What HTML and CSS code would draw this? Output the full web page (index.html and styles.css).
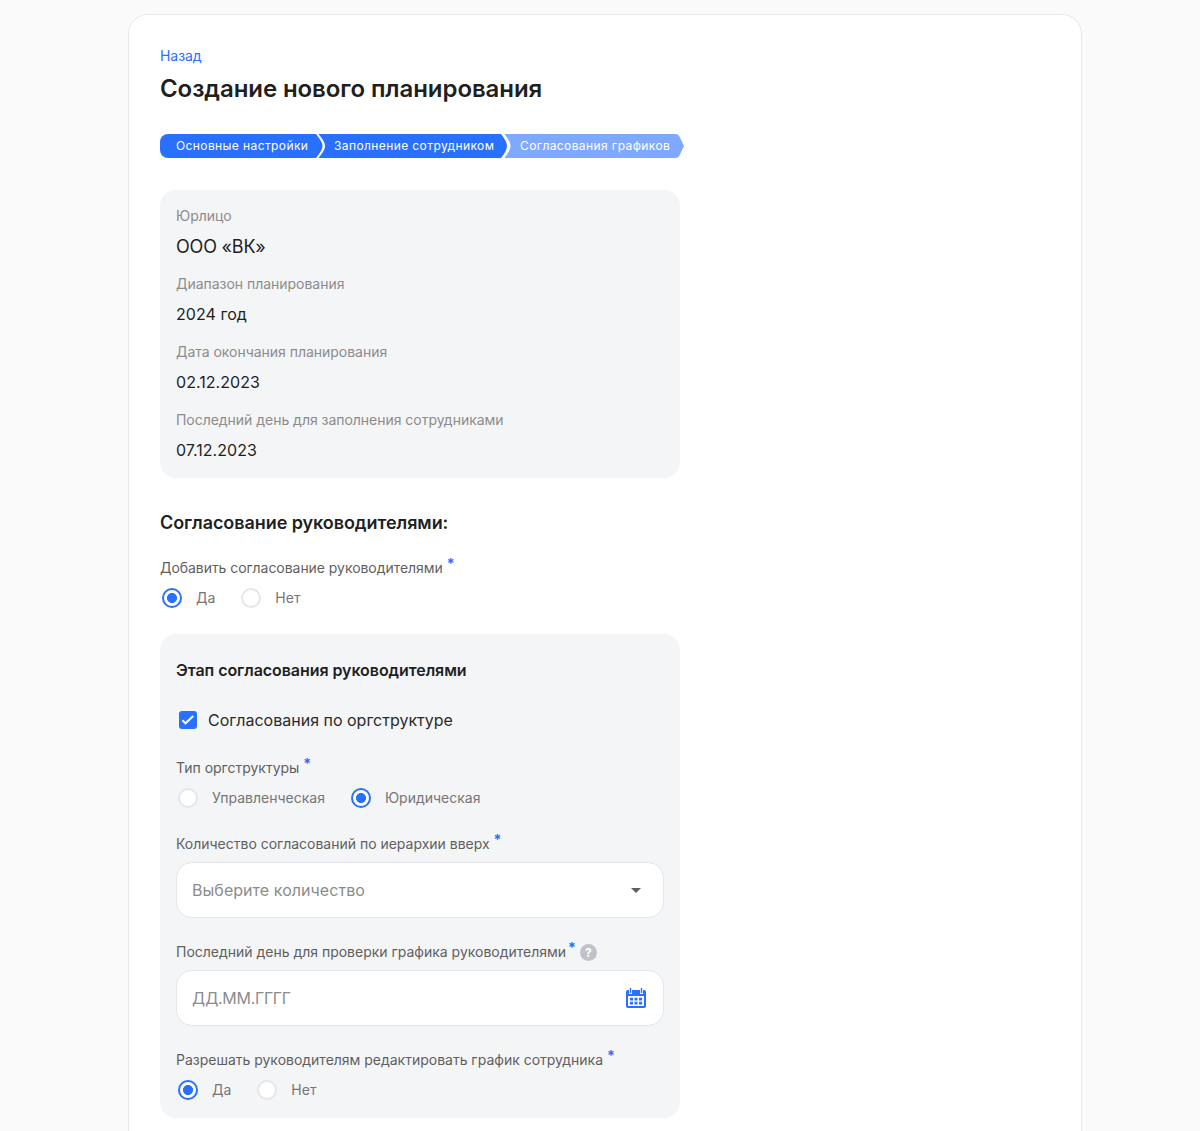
FILE: index.html
```html
<!DOCTYPE html>
<html lang="ru">
<head>
<meta charset="utf-8">
<title>Создание нового планирования</title>
<link rel="stylesheet" href="styles.css">
</head>
<body>
<main class="card">
  <a class="back" href="#">Назад</a>
  <h1 class="title">Создание нового планирования</h1>
  <div class="steps">
    <div class="step step-first">Основные настройки</div>
    <div class="step step-mid">Заполнение сотрудником</div>
    <div class="step step-last">Согласования графиков</div>
  </div>
  <section class="panel info">
    <div class="info-label">Юрлицо</div>
    <div class="info-value info-value-lg">ООО «ВК»</div>
    <div class="info-label">Диапазон планирования</div>
    <div class="info-value">2024 год</div>
    <div class="info-label">Дата окончания планирования</div>
    <div class="info-value">02.12.2023</div>
    <div class="info-label">Последний день для заполнения сотрудниками</div>
    <div class="info-value">07.12.2023</div>
  </section>
  <h2 class="section-title">Согласование руководителями:</h2>
  <div class="field-label field-label-tight">Добавить согласование руководителями<span class="req">*</span></div>
  <div class="radios">
    <span class="radio radio-on"></span><span class="radio-text">Да</span>
    <span class="radio"></span><span class="radio-text">Нет</span>
  </div>
  <section class="panel stage">
    <h3 class="stage-title">Этап согласования руководителями</h3>
    <div class="check-row">
      <span class="check-box">
        <svg width="18" height="18" viewBox="0 0 18 18"><rect width="18" height="18" rx="3" fill="#2970ff"/><path d="M3.400 9.200l3.100 3.100L14.200 5" fill="none" stroke="#fff" stroke-width="2"/></svg>
      </span>
      <span class="check-text">Согласования по оргструктуре</span>
    </div>
    <div class="field-label gap-top">Тип оргструктуры<span class="req">*</span></div>
    <div class="radios">
      <span class="radio"></span><span class="radio-text">Управленческая</span>
      <span class="radio radio-on"></span><span class="radio-text">Юридическая</span>
    </div>
    <div class="field-label gap-top-s">Количество согласований по иерархии вверх<span class="req">*</span></div>
    <div class="input">
      <span class="placeholder">Выберите количество</span>
      <span class="caret"></span>
    </div>
    <div class="field-label gap-top-s">Последний день для проверки графика руководителями<span class="req req-tight">*</span>
      <span class="help">?</span>
    </div>
    <div class="input">
      <span class="placeholder placeholder-date">ДД.ММ.ГГГГ</span>
      <svg class="cal" width="20" height="20" viewBox="0 0 20 20"><path fill="#2970ff" d="M2 2h16a2 2 0 0 1 2 2v14a2 2 0 0 1-2 2H2a2 2 0 0 1-2-2V4a2 2 0 0 1 2-2z"/><path fill="#fff" d="M3 0h3v6H3zM14 0h3v6h-3z"/><path fill="#2970ff" d="M3.800 0h1.400v5H3.800zM14.800 0h1.400v5h-1.400z"/><path fill="#fff" d="M2 8h16v10H2z"/><path fill="#2970ff" d="M4 9.800h3v2.600H4zM8.500 9.800h3v2.600h-3zM13 9.800h3v2.600h-3zM4 13.800h3v2.600H4zM8.500 13.800h3v2.600h-3zM13 13.800h3v2.600h-3z"/></svg>
    </div>
    <div class="field-label gap-top-s">Разрешать руководителям редактировать график сотрудника<span class="req">*</span></div>
    <div class="radios">
      <span class="radio radio-on"></span><span class="radio-text">Да</span>
      <span class="radio"></span><span class="radio-text">Нет</span>
    </div>
  </section>
</main>
</body>
</html>
```
FILE: styles.css
```css
* { box-sizing: border-box; }
html, body { margin: 0; height: 100%; overflow: hidden; }
body {
  background: #fafafa;
  font-family: Inter, "Liberation Sans", sans-serif;
  color: #1f1f1f;
  -webkit-font-smoothing: antialiased;
}
.card {
  width: 954px;
  min-height: 1300px;
  margin: 14px 0 0 128px;
  padding: 31px;
  background: #fff;
  border: 1px solid #e7e8ec;
  border-radius: 20px;
}
.back {
  display: block;
  font-size: 14px;
  line-height: 20px;
  letter-spacing: -0.05px;
  color: #2970ff;
  text-decoration: none;
}
.title {
  margin: 5px 0 0;
  font-size: 24px;
  line-height: 36px;
  font-weight: 600;
  letter-spacing: -0.08px;
  color: #1f1f1f;
}
.steps {
  display: flex;
  margin-top: 27px;
}
.step {
  height: 24px;
  padding-left: 16px;
  font-size: 12px;
  line-height: 24px;
  letter-spacing: 0.4px;
  color: #fff;
  white-space: nowrap;
  background: #2970ff;
}
.step-first {
  width: 163px;
  border-radius: 8px 0 0 8px;
  clip-path: path("M0 0H156C159 4 162.500 8 162.500 12C162.500 16 159 20 156 24H0Z");
}
.step-mid {
  width: 189px;
  margin-left: -5px;
  clip-path: path("M0.500 0H183C186 4 189 8 189 12C189 16 186 20 183 24H0.500C3.500 20 7 16 7 12C7 8 3.500 4 0.500 0Z");
}
.step-last {
  width: 180px;
  margin-left: -3px;
  background: #7fa9ff;
  clip-path: path("M0.500 0H171C174 0 174.500 1 175.500 2.500L179 10C180 11.500 180 12.500 179 14L175.500 21.500C174.500 23 174 24 171 24H0.500C3.500 20 6.500 16 6.500 12C6.500 8 3.500 4 0.500 0Z");
}
.panel {
  width: 520px;
  background: #f4f5f7;
  border-radius: 16px;
}
.info {
  margin-top: 32px;
  padding: 16px;
}
.info-label {
  font-size: 14px;
  line-height: 20px;
  letter-spacing: -0.03px;
  color: #8c8c8c;
}
.info-value {
  margin: 8px 0 16px;
  font-size: 16px;
  line-height: 24px;
  letter-spacing: 0.05px;
  color: #1f1f1f;
}
.info-value-lg {
  padding-top: 1px;
  height: 24px;
  font-size: 18px;
  letter-spacing: -0.2px;
}
.info-value:last-child { margin-bottom: 0; }
.section-title {
  margin: 32px 0 0;
  font-size: 18px;
  line-height: 26px;
  font-weight: 600;
  letter-spacing: -0.07px;
}
.field-label {
  display: flex;
  align-items: center;
  font-size: 14px;
  line-height: 20px;
  letter-spacing: -0.01px;
  color: #5f5f5f;
}
.field-label-tight { letter-spacing: -0.05px; }
.section-title + .field-label { margin-top: 22px; }
.gap-top { margin-top: 26px; }
.gap-top-s { margin-top: 24px; }
.req {
  align-self: flex-start;
  margin-left: 4px;
  margin-top: -4px;
  font-size: 14px;
  line-height: 20px;
  font-weight: 700;
  color: #2970ff;
}
.req-tight { margin-left: 2px; }
.radios {
  display: flex;
  align-items: center;
  height: 24px;
  margin-top: 8px;
}
.radio {
  flex: none;
  width: 20px;
  height: 20px;
  margin: 0 2px;
  border: 2px solid #e4e6ea;
  border-radius: 50%;
  background: #fff;
}
.radio-on {
  border-color: #2970ff;
  background: radial-gradient(circle, #2970ff 0, #2970ff 4.700px, #fff 5.300px);
}
.radio-text {
  margin: 0 24px 0 12px;
  font-size: 14px;
  line-height: 20px;
  color: #767676;
}
.stage {
  margin-top: 24px;
  padding: 24px 16px 16px;
}
.stage-title {
  margin: 0;
  font-size: 16px;
  line-height: 24px;
  font-weight: 600;
  letter-spacing: -0.06px;
}
.check-row {
  display: flex;
  align-items: center;
  gap: 8px;
  height: 24px;
  margin-top: 26px;
}
.check-box {
  display: flex;
  align-items: center;
  justify-content: center;
  width: 24px;
  height: 24px;
}
.check-text {
  font-size: 16px;
  line-height: 24px;
  color: #2b2b2b;
}
.input {
  display: flex;
  align-items: center;
  justify-content: space-between;
  height: 56px;
  margin-top: 8px;
  padding: 0 18px 0 15px;
  background: #fff;
  border: 1px solid #e4e6ea;
  border-radius: 16px;
}
.placeholder {
  font-size: 16px;
  line-height: 24px;
  letter-spacing: 0.05px;
  color: #8c8c8c;
}
.placeholder-date { letter-spacing: -0.3px; }
.caret {
  width: 0;
  height: 0;
  margin-right: 4px;
  border-left: 5px solid transparent;
  border-right: 5px solid transparent;
  border-top: 5px solid #5f5f5f;
}
.cal { margin-right: -1px; }
.help {
  display: flex;
  align-items: center;
  justify-content: center;
  width: 17px;
  height: 17px;
  margin-left: 4px;
  border-radius: 50%;
  background: #bfc2c8;
  color: #fff;
  font-size: 12px;
  line-height: 17px;
  font-weight: 700;
}
```
